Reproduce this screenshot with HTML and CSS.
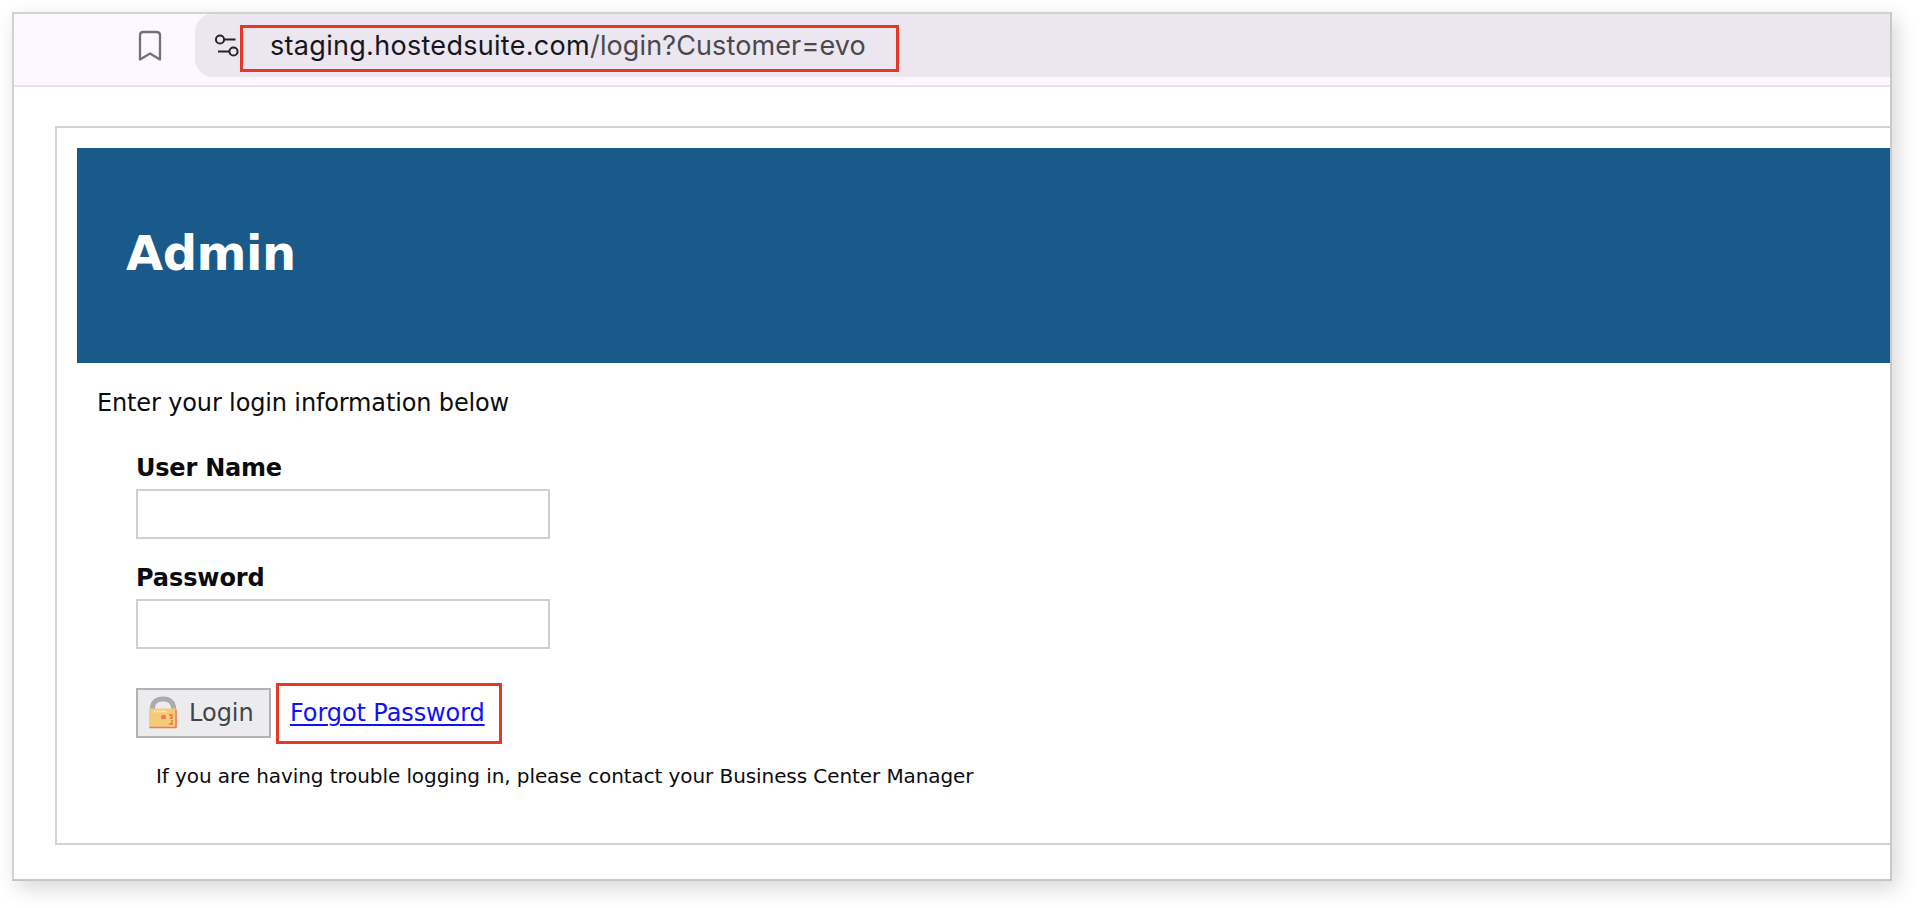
FILE: index.html
```
<!DOCTYPE html>
<html lang="en">
<head>
<meta charset="utf-8">
<title>Admin</title>
<link rel="stylesheet" href="styles.css">
</head>
<body>
<div class="window">
  <header class="toolbar">
    <svg class="bookmark" width="24" height="32" viewBox="0 0 24 32" fill="none" stroke="#737178" stroke-width="2.3" stroke-linejoin="round"><path d="M5 2h13.500Q22 2 22 5.500V29.500L12 23.500L2 29.500V5.500Q2 2 5 2z"/></svg>
    <div class="omnibox">
      <svg class="tune" width="26" height="26" viewBox="0 0 26 26" fill="none" stroke="#252428" stroke-width="2"><circle cx="6" cy="6.500" r="4.100"/><path d="M10.500 6.500H21.500M4 18.500H15"/><circle cx="19.500" cy="18.500" r="4.100"/></svg>
      <div class="url"><span class="host">staging.hostedsuite.com</span><span class="path">/login?Customer=evo</span></div>
    </div>
  </header>
  <main class="panel">
    <div class="banner"><h1>Admin</h1></div>
    <p class="intro">Enter your login information below</p>
    <form class="form">
      <label class="user-label" for="user">User Name</label>
      <input id="user" type="text">
      <label class="pass-label" for="pass">Password</label>
      <input id="pass" type="password">
      <div class="actions">
        <button type="button" class="login">
          <svg width="30" height="34" viewBox="0 0 30 34"><path d="M4.500 13V10.500Q6 3 15 3T25.500 10.500V13" fill="none" stroke="#aaabac" stroke-width="5"/><path d="M1 12.500H28.500V32H1z" fill="#f4cb79"/><path d="M1.500 31.500H28V13.500" fill="none" stroke="#ee7959" stroke-width="1.500"/><path d="M6 15.500H19" stroke="#fff4dc" stroke-width="1.300" stroke-dasharray="1.500 1"/><path d="M14 23V20h3v3M14 22h3M21 19h3v3h-2M24 24v4h-3" fill="none" stroke="#eb6950" stroke-width="1.300"/></svg>
          <span>Login</span>
        </button>
        <div class="forgot"><a href="#">Forgot Password</a></div>
      </div>
    </form>
    <p class="help">If you are having trouble logging in, please contact your Business Center Manager</p>
  </main>
</div>
</body>
</html>
```
FILE: styles.css
```
* { box-sizing: border-box; }
body {
  margin: 0;
  padding: 12px;
  height: 908px;
  overflow: hidden;
  background: #fff;
  color: #0c0c0f;
  font: 24px/28px "DejaVu Sans", Verdana, sans-serif;
}
.window {
  width: 1880px;
  height: 869px;
  overflow: hidden;
  border: 2px solid #d2d2d2;
  border-right-color: #c9c9c9;
  border-bottom-color: #c6c6c6;
  background: #fff;
  box-shadow: 5px 7px 20px rgba(0, 0, 0, .16);
}
.toolbar {
  display: flex;
  align-items: flex-start;
  height: 73px;
  padding-left: 124px;
  background: #fdf8ff;
  border-bottom: 2px solid #e5e2e9;
}
.bookmark { margin-top: 16px; }
.omnibox {
  display: flex;
  align-items: flex-start;
  flex: 1;
  height: 63px;
  margin-left: 33px;
  padding-left: 19px;
  background: #ebe6f0;
  border-radius: 18px 0 0 18px;
}
.tune { margin-top: 19px; }
.url {
  width: 659px;
  height: 47px;
  margin-top: 11px;
  padding: 1px 0 0 27px;
  border: 3px solid #e53927;
  font: 27px/34px Inter, sans-serif;
  letter-spacing: .3px;
  white-space: nowrap;
}
.host { color: #17161a; }
.path { color: #4a484d; letter-spacing: .12px; }
.panel {
  height: 719px;
  margin: 39px 0 0 41px;
  padding: 20px 0 0 20px;
  border: 2px solid #d3d3d4;
  border-right: 0;
}
.banner {
  height: 215px;
  padding: 77px 0 0 49px;
  background: #195a8b;
}
h1 {
  margin: 0;
  color: #fff;
  font-size: 48px;
  line-height: 56px;
  letter-spacing: -.5px;
}
.intro { margin: 26px 0 0 20px; letter-spacing: -.14px; }
.form {
  display: flex;
  flex-direction: column;
  align-items: flex-start;
  margin: 37px 0 0 59px;
}
.form label { font-weight: bold; }
.user-label { letter-spacing: -.22px; }
.pass-label { letter-spacing: -.1px; }
.form input {
  width: 414px;
  height: 50px;
  margin: 7px 0 25px;
  border: 2px solid #cfcfcf;
  background: #fff;
}
.actions {
  display: flex;
  align-items: flex-start;
  gap: 5px;
  margin-top: 9px;
}
.login {
  display: flex;
  align-items: center;
  width: 135px;
  height: 50px;
  margin-top: 5px;
  padding: 0 0 0 10px;
  gap: 11px;
  border: 2px solid #b2b2b4;
  background: #ececef;
  color: #444448;
  font: inherit;
}
.forgot {
  width: 226px;
  height: 61px;
  padding: 13px 0 0 11px;
  border: 3px solid #e53927;
  white-space: nowrap;
  letter-spacing: -.1px;
}
.forgot a {
  color: #1010ff;
  text-underline-offset: 3px;
  text-decoration-thickness: 2px;
}
.help {
  margin: 20px 0 0 79px;
  font-size: 20px;
  line-height: 24px;
  letter-spacing: -.085px;
}
```
